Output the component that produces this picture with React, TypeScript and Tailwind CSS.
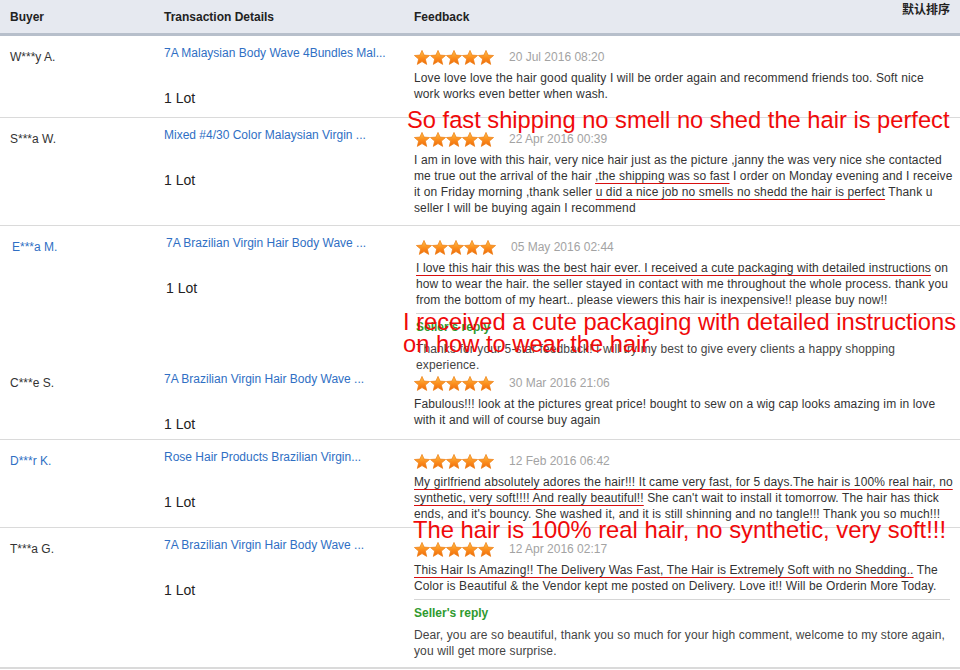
import React from 'react';

type Part = string | { u: string };
type Line = Part[];

type Row = {
  buyer: string;
  buyerBlue?: boolean;
  product: string;
  date: string;
  lines: Line[];
  reply?: string[];
  rowClass: string;
  shift?: boolean;
};

const ROWS: Row[] = [
  {
    buyer: 'W***y A.',
    product: '7A Malaysian Body Wave 4Bundles Mal...',
    date: '20 Jul 2016 08:20',
    lines: [
      ['Love love love the hair good quality I will be order again and recommend friends too. Soft nice'],
      ['work works even better when wash.'],
    ],
    rowClass: 'h-[82px] border-b border-[#dadada]',
  },
  {
    buyer: 'S***a W.',
    product: 'Mixed #4/30 Color Malaysian Virgin ...',
    date: '22 Apr 2016 00:39',
    lines: [
      ['I am in love with this hair, very nice hair just as the picture ,janny the was very nice she contacted'],
      ['me true out the arrival of the hair ', { u: ',the shipping was so fast' }, ' I order on Monday evening and I receive'],
      ['it on Friday morning ,thank seller ', { u: 'u did a nice job no smells no shedd the hair is perfect' }, ' Thank u'],
      ['seller I will be buying again I recommend'],
    ],
    rowClass: 'h-[108px] border-b border-[#dadada]',
  },
  {
    buyer: 'E***a M.',
    buyerBlue: true,
    product: '7A Brazilian Virgin Hair Body Wave ...',
    date: '05 May 2016 02:44',
    lines: [
      [{ u: 'I love this hair this was the best hair ever. I received a cute packaging with detailed instructions' }, ' on'],
      ['how to wear the hair. the seller stayed in contact with me throughout the whole process. thank you'],
      ['from the bottom of my heart.. please viewers this hair is inexpensive!! please buy now!!'],
    ],
    reply: [
      'Thanks for your 5-star feedback! I will try my best to give every clients a happy shopping',
      'experience.',
    ],
    rowClass: 'h-[136px]',
    shift: true,
  },
  {
    buyer: 'C***e S.',
    product: '7A Brazilian Virgin Hair Body Wave ...',
    date: '30 Mar 2016 21:06',
    lines: [
      ['Fabulous!!! look at the pictures great price! bought to sew on a wig cap looks amazing im in love'],
      ['with it and will of course buy again'],
    ],
    rowClass: 'h-[78px] border-b border-[#dadada]',
  },
  {
    buyer: 'D***r K.',
    buyerBlue: true,
    product: 'Rose Hair Products Brazilian Virgin...',
    date: '12 Feb 2016 06:42',
    lines: [
      [{ u: 'My girlfriend absolutely adores the hair!!! It came very fast, for 5 days.The hair is 100% real hair, no' }],
      [{ u: 'synthetic, very soft!!!! And really beautiful!!' }, " She can't wait to install it tomorrow. The hair has thick"],
      ["ends, and it's bouncy. She washed it, and it is still shinning and no tangle!!! Thank you so much!!!"],
    ],
    rowClass: 'h-[88px] border-b border-[#dadada]',
  },
  {
    buyer: 'T***a G.',
    product: '7A Brazilian Virgin Hair Body Wave ...',
    date: '12 Apr 2016 02:17',
    lines: [
      [{ u: 'This Hair Is Amazing!! The Delivery Was Fast, The Hair is Extremely Soft with no Shedding..' }, ' The'],
      ['Color is Beautiful & the Vendor kept me posted on Delivery. Love it!! Will be Orderin More Today.'],
    ],
    reply: [
      'Dear, you are so beautiful, thank you so much for your high comment, welcome to my store again,',
      'you will get more surprise.',
    ],
    rowClass: 'h-[141px] border-b-2 border-[#dadada]',
  },
];

function Stars() {
  const pts =
    '8,0.4 10.1,5.1 15.6,5.5 11.4,9.1 12.7,14.4 8,11.6 3.3,14.4 4.6,9.1 0.4,5.5 5.9,5.1';
  return (
    <svg width="80" height="15" viewBox="0 0 80 15" className="block">
      <defs>
        <linearGradient id="starfill" x1="0" y1="0" x2="0" y2="1">
          <stop offset="0" stopColor="#ffc14a" />
          <stop offset="0.55" stopColor="#fb8c1c" />
          <stop offset="1" stopColor="#ef6a0a" />
        </linearGradient>
      </defs>
      {[0, 1, 2, 3, 4].map((i) => (
        <polygon
          key={i}
          points={pts}
          transform={`translate(${i * 16} 0)`}
          fill="url(#starfill)"
          stroke="#ec7d12"
          strokeWidth="0.7"
          strokeLinejoin="round"
        />
      ))}
    </svg>
  );
}

function FeedbackRow({ row }: { row: Row }) {
  return (
    <div className={`flex ${row.rowClass}`}>
      <div className={`flex w-full ${row.shift ? 'pl-[2px]' : ''}`}>
        <div className="w-[164px] shrink-0 pl-[10px] pt-[13px]">
          <p className={`text-[12px] leading-4 ${row.buyerBlue ? 'text-[#2f6fc4]' : 'text-[#333]'}`}>
            {row.buyer}
          </p>
        </div>
        <div className="w-[250px] shrink-0 pt-[9px]">
          <p className="text-[12px] leading-4 text-[#2f6fc4]">{row.product}</p>
          <p className="mt-[29px] text-[14px] leading-4 text-[#222]">1 Lot</p>
        </div>
        <div className="w-[536px] shrink-0 pt-[14px]">
          <div className="flex h-[14px] items-center gap-[15px]">
            <Stars />
            <span className="text-[12px] leading-4 text-[#a3a3a3]">{row.date}</span>
          </div>
          <div className="mt-[6px] text-[12px] leading-4 tracking-[0.12px] text-[#333]">
            {row.lines.map((line, li) => (
              <p key={li} className="whitespace-pre">
                {line.map((part, i) =>
                  typeof part === 'string' ? (
                    <span key={i}>{part}</span>
                  ) : (
                    <span
                      key={i}
                      className="underline decoration-[#d80f0f] decoration-1 underline-offset-[3px]"
                    >
                      {part.u}
                    </span>
                  )
                )}
              </p>
            ))}
          </div>
          {row.reply && (
            <div>
              <div className="mt-[5px] border-t border-[#d6d6d6]" />
              <p className="mt-[5px] text-[12px] font-bold leading-4 text-[#2f9a2f]">Seller's reply</p>
              <div className="mt-[6px] text-[12px] leading-4 tracking-[0.12px] text-[#444]">
                {row.reply.map((l, i) => (
                  <p key={i} className="whitespace-pre">
                    {l}
                  </p>
                ))}
              </div>
            </div>
          )}
        </div>
      </div>
    </div>
  );
}

export default function App() {
  return (
    <div className="relative h-[670px] w-[960px] overflow-hidden bg-white font-['Liberation_Sans','Noto_Sans_CJK_SC',Arial,sans-serif]">
      <div className="flex h-[36px] border-b-[3px] border-[#b7bfcb] bg-[#e6e9f0]">
        <div className="flex w-[164px] items-center pl-[10px] text-[12px] font-bold text-[#222]">Buyer</div>
        <div className="flex w-[250px] items-center text-[12px] font-bold text-[#222]">Transaction Details</div>
        <div className="flex w-[488px] items-center text-[12px] font-bold text-[#222]">Feedback</div>
        <div className="pt-[1px] text-[12px] font-bold text-[#222]">默认排序</div>
      </div>

      {ROWS.map((row, i) => (
        <FeedbackRow key={i} row={row} />
      ))}

      <p className="absolute left-[407px] top-[108px] whitespace-nowrap text-[23.7px] leading-[24px] text-[#f00a0a]">
        So fast shipping no smell no shed the hair is perfect
      </p>
      <p className="absolute left-[403px] top-[311px] whitespace-nowrap text-[23.7px] leading-[22px] text-[#f00a0a]">
        I received a cute packaging with detailed instructions
        <br />
        on how to wear the hair
      </p>
      <p className="absolute left-[413px] top-[518px] whitespace-nowrap text-[23.8px] leading-[24px] text-[#f00a0a]">
        The hair is 100% real hair, no synthetic, very soft!!!
      </p>
    </div>
  );
}
